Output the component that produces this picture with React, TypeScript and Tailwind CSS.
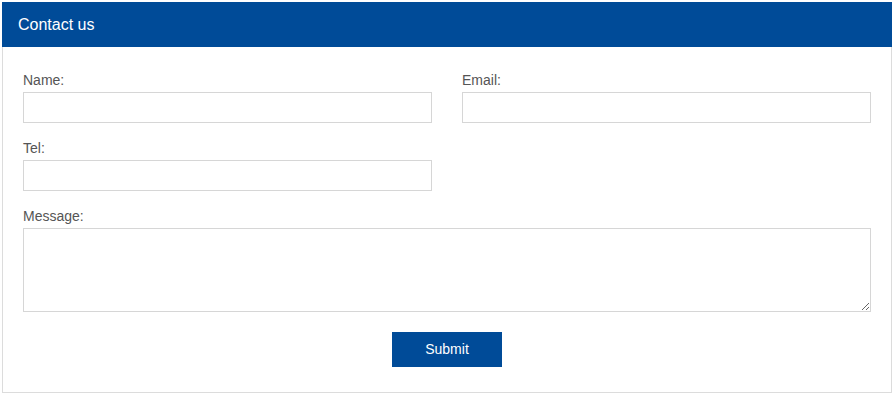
export default function App() {
  return (
    <div className="m-[2px] w-[890px] font-['Liberation_Sans',Arial,sans-serif]">
      {/* header */}
      <div className="h-[45px] bg-[#004b98] flex items-center px-4">
        <h2 className="text-white text-[16px] leading-5">Contact us</h2>
      </div>

      {/* form */}
      <form
        className="border-x border-b border-[#dcdcdc] px-5 pt-[23px] pb-[25px]"
        onSubmit={(e) => e.preventDefault()}
      >
        <div className="grid grid-cols-2 gap-x-[30px] gap-y-[15px]">
          <Field label="Name:" />
          <Field label="Email:" />
          <Field label="Tel:" />
          <div />
          <div className="col-span-2">
            <label className="block text-[14px] leading-5 text-[#555] mb-[2px]">Message:</label>
            <textarea className="block w-full h-[84px] border border-[#d6d6d6] bg-white outline-none" />
          </div>
        </div>

        <div className="flex justify-center mt-5">
          <button
            type="submit"
            className="w-[110px] h-[35px] bg-[#004b98] text-white text-[14px]"
          >
            Submit
          </button>
        </div>
      </form>
    </div>
  );
}

function Field({ label }: { label: string }) {
  return (
    <div>
      <label className="block text-[14px] leading-5 text-[#555] mb-[2px]">{label}</label>
      <input type="text" className="block w-full h-[31px] border border-[#d6d6d6] bg-white outline-none" />
    </div>
  );
}
